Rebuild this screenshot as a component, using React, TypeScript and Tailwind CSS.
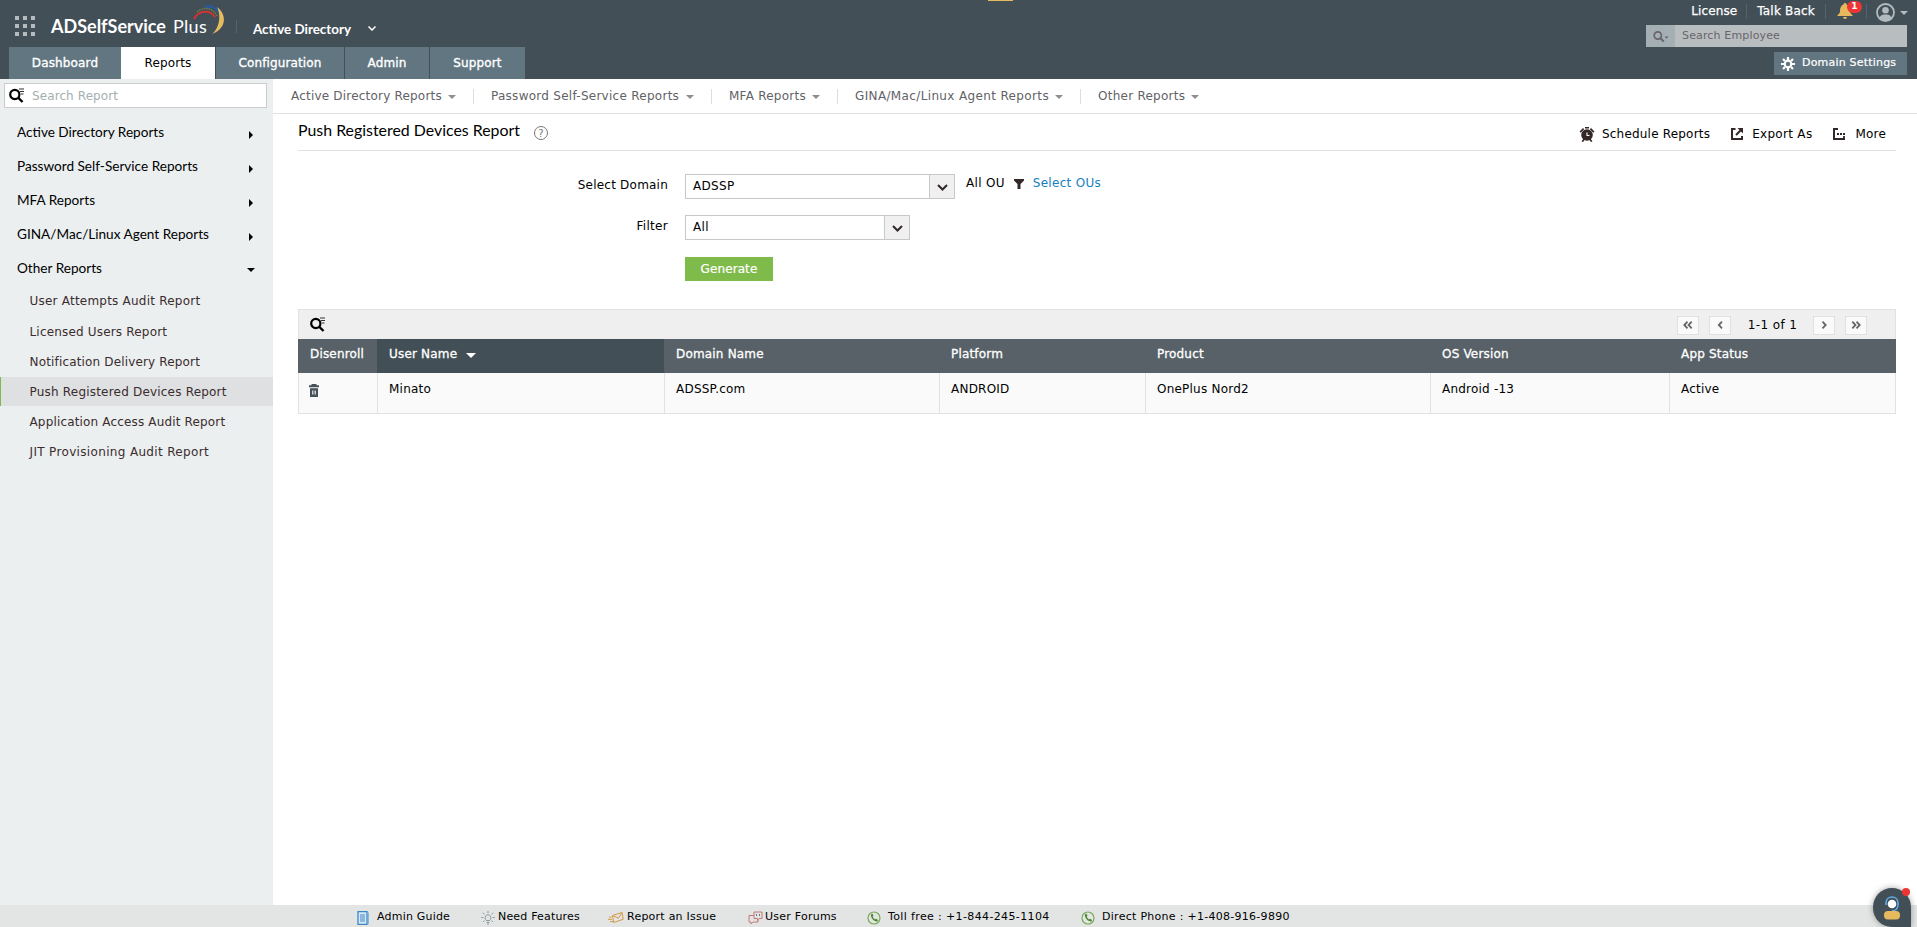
import type { ReactNode } from "react";
import clsx from "clsx";

const tabs = [
  { label: "Dashboard", width: "w-[112px]" },
  { label: "Reports", width: "w-[94px]", active: true },
  { label: "Configuration", width: "w-[128px]" },
  { label: "Admin", width: "w-[84px]" },
  { label: "Support", width: "w-[95px]" },
];

const categories = [
  { label: "Active Directory Reports", height: "h-[33px]" },
  { label: "Password Self-Service Reports", height: "h-[34px]" },
  { label: "MFA Reports", height: "h-[34px]" },
  { label: "GINA/Mac/Linux Agent Reports", height: "h-[34px]" },
  { label: "Other Reports", height: "h-[34px]", open: true },
];

const otherReports = [
  { label: "User Attempts Audit Report", height: "h-[31px]", tracking: "tracking-[0.22px]" },
  { label: "Licensed Users Report", height: "h-[31px]", tracking: "tracking-[0.18px]" },
  { label: "Notification Delivery Report", height: "h-[30px]", tracking: "tracking-[0.16px]" },
  { label: "Push Registered Devices Report", height: "h-[29px]", tracking: "tracking-[0.2px]", active: true },
  { label: "Application Access Audit Report", height: "h-[31px]", tracking: "tracking-[0.16px]" },
  { label: "JIT Provisioning Audit Report", height: "h-[30px]", tracking: "tracking-[0.34px]" },
];

const reportMenus = [
  { label: "Active Directory Reports", width: "w-[151px]", tracking: "tracking-[0.2px]" },
  { label: "Password Self-Service Reports", width: "w-[189px]", tracking: "tracking-[0.27px]" },
  { label: "MFA Reports", width: "w-[77px]", tracking: "tracking-[0.25px]" },
  { label: "GINA/Mac/Linux Agent Reports", width: "w-[194px]", tracking: "tracking-[0.36px]" },
  { label: "Other Reports", width: "w-[87px]", tracking: "tracking-[0.25px]" },
];

const columns = [
  { label: "Disenroll", value: "", width: "w-[79px]" },
  { label: "User Name", value: "Minato", width: "w-[287px]", sorted: true },
  { label: "Domain Name", value: "ADSSP.com", width: "w-[275px]" },
  { label: "Platform", value: "ANDROID", width: "w-[206px]" },
  { label: "Product", value: "OnePlus Nord2", width: "w-[285px]" },
  { label: "OS Version", value: "Android -13", width: "w-[239px]" },
  { label: "App Status", value: "Active", width: "w-[227px]" },
];

function CaretDown({ className }: { className: string }) {
  return (
    <svg viewBox="0 0 8 4" className={clsx("shrink-0", className)} fill="currentColor">
      <path d="M0 0h8L4 4z" />
    </svg>
  );
}

function GridIcon() {
  return (
    <div className="grid h-5 w-5 grid-cols-3 gap-1">
      {Array.from({ length: 9 }).map((_, i) => (
        <span key={i} className="h-1 w-1 bg-[#b4babd]" />
      ))}
    </div>
  );
}

function LogoArc() {
  return (
    <svg viewBox="0 0 32 30" className="h-[30px] w-8" fill="none">
      <path d="M1 14C5 6 16 3.500 22 12" stroke="#e02f2c" strokeWidth="1.8" />
      <path d="M4 7C11 1 20 3 24 11" stroke="#6c8045" strokeWidth="1.6" strokeDasharray="1.500 1" />
      <path d="M12 1.500C21 0 27 6 28 13" stroke="#245ba8" strokeWidth="2" />
      <path d="M24 2c9 6 11 21-5 27 8-7 9-19 5-27z" fill="#e5bb60" />
    </svg>
  );
}

function SearchListIcon() {
  return (
    <svg viewBox="0 0 16 15" className="h-[15px] w-4 shrink-0" fill="none" stroke="#000">
      <circle cx="5.800" cy="6.500" r="4.600" strokeWidth="2.2" />
      <path d="M9 9.500l4.500 4.500" strokeWidth="2.4" />
      <path d="M10 1h5M11 3.500h4M12 6h2.500" strokeWidth="1.2" stroke="#333" />
    </svg>
  );
}

function AlarmIcon() {
  return (
    <svg viewBox="0 0 16 16" className="h-4 w-4" fill="#332728">
      <circle cx="8" cy="9" r="5.800" />
      <path d="M0.500 5.500L4 2l1.200 1.200L1.700 6.700zM15.500 5.500L12 2l-1.200 1.200 3.500 3.500zM6 1h4v1.600H6zM2.500 15.500l2-3 1.500 1-2 2.500zM13.500 15.500l-2-3-1.500 1 2 2.500z" />
      <path d="M8 6.500v3h2.500" fill="none" stroke="#fff" strokeWidth="1.1" />
    </svg>
  );
}

function ExportIcon() {
  return (
    <svg viewBox="0 0 14 14" className="h-3.5 w-3.5" fill="none" stroke="#332728" strokeWidth="2">
      <path d="M5.500 2H2v10h10V9" />
      <path d="M6 8l5.500-5.500" />
      <path d="M7.500 1h5.500v5.500z" fill="#332728" stroke="none" />
    </svg>
  );
}

function MoreIcon() {
  return (
    <svg viewBox="0 0 14 14" className="h-3.5 w-3.5" fill="none" stroke="#332728" strokeWidth="2">
      <path d="M6 2H2v10h11" />
      <path d="M5 7h2M8 7h2M11 7h2M12 9v4" strokeWidth="1.800" />
    </svg>
  );
}

function TrashIcon() {
  return (
    <svg viewBox="0 0 10 13" className="h-[13px] w-2.5" fill="#45525a">
      <path d="M0 1.300h2.500V0h5v1.300H10V3.300H0zM1 4.300h8V13H1z" />
      <path d="M3.800 6.500v4M6.200 6.500v4" stroke="#fafafa" strokeWidth="1.1" />
    </svg>
  );
}

function PhoneIcon() {
  return (
    <svg viewBox="0 0 14 14" className="h-3.5 w-3.5" fill="none">
      <circle cx="7" cy="7" r="6" stroke="#77ab57" strokeWidth="1.2" />
      <path d="M4.200 3.200c-1.500 2.500 3 7.800 6.200 7.300l.6-1.400-2-1.300-1 .6C6.800 7.800 6 6.600 5.700 5.600l.8-.9-1-1.900z" fill="#4d8431" />
    </svg>
  );
}

function GuideIcon() {
  return (
    <svg viewBox="0 0 12 14" className="h-3.5 w-3" fill="none">
      <path d="M1 .7h9v12.600H1z" fill="#d8eaf7" stroke="#3e86c8" strokeWidth="1.300" />
      <path d="M11 1.500v11.800" stroke="#6ba7da" strokeWidth="1.500" />
      <path d="M3 4h5M3 6h5M3 8h5M3 10h5" stroke="#3e86c8" />
    </svg>
  );
}

function BulbIcon() {
  return (
    <svg viewBox="0 0 14 14" className="h-3.5 w-3.5" fill="none" stroke="#8a979d">
      <path d="M5.300 9.500C3 7.500 4.500 3.700 7 3.700s4 3.800 1.700 5.800zM5.500 11.300h3M6 13h2" />
      <path d="M7 0v2M2 1.700l1.500 1.600M12 1.700l-1.500 1.600M.3 6.500h2M11.700 6.500h2M2 11l1.300-1.300M12 11l-1.300-1.300" />
    </svg>
  );
}

function MailIcon() {
  return (
    <svg viewBox="0 0 16 14" className="h-3.5 w-4" fill="none" stroke="#d39a44">
      <path d="M4.500 4.500L14 1.500l1.200 6.800-9.500 3.200zM4.500 4.500l6 2.700 3.500-5.700" />
      <path d="M1 6h2.500M0 8.300h4M2 10.600h3" />
    </svg>
  );
}

function ForumsIcon() {
  return (
    <svg viewBox="0 0 15 14" className="h-3.5 w-[15px]" fill="none" stroke="#c2797b">
      <path d="M6 1h8v6.500h-3l-1.500 2V7.500H6z" />
      <path d="M6 4.500H1V11h2v2l2-2h5V8.500" />
      <path d="M8.500 3v2M11.500 3v2" stroke="#777" />
    </svg>
  );
}

function Header() {
  return (
    <header className="relative flex h-[79px] justify-between bg-[#434f57] text-white">
      <div className="absolute top-0 left-[988px] h-px w-[25px] bg-[#e5bb60]" />
      <div className="flex flex-col justify-between">
        <div className="flex h-[47px] items-start pl-[15px]">
          <div className="pt-4">
            <GridIcon />
          </div>
          <div className="ml-4 flex pt-[14px] font-[Lato] text-[18px] leading-6">
            <span className="w-[117px] font-bold">ADSelfService</span>
            <span className="ml-[5px] w-[20px] tracking-[0.3px]">Plus</span>
          </div>
          <div className="relative z-10 pt-[5px]">
            <LogoArc />
          </div>
          <div className="mt-5 ml-[11px] h-[13px] w-px bg-[#57636b]" />
          <span className="mt-[19px] ml-4 w-[98px] font-[Lato] text-[13.4px] leading-5 font-bold whitespace-nowrap">
            Active Directory
          </span>
          <svg viewBox="0 0 8 5" className="mt-[26px] ml-[17px] h-[5px] w-2" fill="none" stroke="#fff" strokeWidth="1.500">
            <path d="M.5.5L4 4 7.500.5" />
          </svg>
        </div>
        <nav className="flex gap-px pl-[9px]">
          {tabs.map((tab) => (
            <a
              key={tab.label}
              className={clsx(
                "flex h-8 items-center justify-center text-[12px] tracking-[0.13px]",
                tab.width,
                tab.active
                  ? "-ml-px bg-white text-black"
                  : "bg-[#627682] text-white [-webkit-text-stroke:0.35px_white]"
              )}
            >
              {tab.label}
            </a>
          ))}
        </nav>
      </div>

      <div className="flex flex-col items-end pr-[10px] text-[12px]">
        <div className="flex h-[25px] items-start">
          <span className="pt-[3px] leading-4 tracking-[0.1px] [-webkit-text-stroke:0.25px_white]">License</span>
          <span className="mt-1 ml-[9px] h-[15px] w-px bg-[#57636b]" />
          <span className="ml-[10px] pt-[3px] leading-4 tracking-[0.2px] [-webkit-text-stroke:0.25px_white]">Talk Back</span>
          <span className="mt-1 ml-[10px] h-[15px] w-px bg-[#57636b]" />
          <div className="relative mt-[3px] ml-[11px] h-4 w-[29px]">
            <svg viewBox="0 0 16 16" className="h-4 w-4" fill="#e5b95c">
              <path d="M8 0c1 0 1.500.6 1.500 1.500C12 2.500 13 5 13 8c0 2 1 3 2.500 4v1H.5v-1C2 11 3 10 3 8c0-3 1-5.500 3.500-6.500C6.500.6 7 0 8 0zM6 14h4c0 1.200-1 2-2 2s-2-.8-2-2z" />
            </svg>
            <span className="absolute -top-[2px] left-[10px] flex h-[12px] w-[15px] items-center justify-center rounded-full bg-[#ee3535] text-[9px] font-bold">
              1
            </span>
          </div>
          <span className="mt-1 ml-0 h-[15px] w-px bg-[#57636b]" />
          <svg viewBox="0 0 19 19" className="mt-[3px] ml-[9px] h-[19px] w-[19px]">
            <circle cx="9.500" cy="9.500" r="8.500" fill="#434f57" stroke="#b1babf" strokeWidth="1.800" />
            <circle cx="9.500" cy="7.200" r="3.300" fill="#b1babf" />
            <path d="M3.500 15c1-3.300 3.500-3.500 6-3.500s5 .2 6 3.500c-3.500 4-8.500 4-12 0z" fill="#b1babf" />
          </svg>
          <CaretDown className="mt-[11px] -mr-px ml-[5px] h-1 w-2 text-[#b1babf]" />
        </div>
        <div className="flex h-[22px] w-[261px] text-[11px] text-[#6b6569]">
          <div className="flex w-[29px] items-center justify-center bg-[#a3afb3]">
            <svg viewBox="0 0 16 11" className="h-[11px] w-4" fill="none" stroke="#6b6569">
              <circle cx="4.800" cy="4.500" r="3.600" strokeWidth="1.700" />
              <path d="M7.300 7l3.500 3.700" strokeWidth="2" />
              <path d="M11.500 5.500h4l-2 2.200z" fill="#6b6569" stroke="none" />
            </svg>
          </div>
          <div className="flex flex-1 items-center bg-[#b8bdc0] pl-[7px] tracking-[0.15px]">Search Employee</div>
        </div>
        <div className="mt-[5px] flex h-[23px] w-[133px] items-center bg-[#627682] pl-[7px] text-[11px] tracking-[0.2px]">
          <svg viewBox="0 0 14 14" className="mr-[7px] h-3.5 w-3.5" fill="none" stroke="#fff">
            <circle cx="7" cy="7" r="3.300" strokeWidth="2.200" />
            <path
              d="M7 0v3M7 11v3M0 7h3M11 7h3M2 2l2 2M10 10l2 2M12 2l-2 2M4 10l-2 2"
              strokeWidth="2.200"
            />
          </svg>
          <span className="[-webkit-text-stroke:0.2px_white]">Domain Settings</span>
        </div>
      </div>
    </header>
  );
}

function Sidebar() {
  return (
    <aside className="w-[273px] shrink-0 bg-[#ebeff0] pt-1">
      <div className="ml-1 flex h-[25px] w-[263px] items-center border border-[#ccc] bg-white pl-1 text-[12px] text-[#a4b0b0]">
        <SearchListIcon />
        <span className="ml-[7px] tracking-[0.1px]">Search Report</span>
      </div>
      <div className="pt-2">
        {categories.map((item) => (
          <div key={item.label} className={clsx("flex items-center justify-between pr-[18px] pl-[17px]", item.height)}>
            <span className="font-[Lato] text-[13.6px] text-black">{item.label}</span>
            {item.open ? (
              <CaretDown className="mt-[4px] h-1 w-2 text-black" />
            ) : (
              <svg viewBox="0 0 4 8" className="mt-[5px] mr-[2px] h-2 w-1">
                <path d="M0 0l4 4-4 4z" />
              </svg>
            )}
          </div>
        ))}
      </div>
      <ul>
        {otherReports.map((item) => (
          <li
            key={item.label}
            className={clsx(
              "flex items-center border-l pl-[28.5px] text-[12px] text-[#3b2c2e]",
              item.height,
              item.tracking,
              item.active ? "border-[#7fbb4a] bg-[#dfe0e2]" : "border-transparent"
            )}
          >
            {item.label}
          </li>
        ))}
      </ul>
    </aside>
  );
}

function SelectBox({ value, className }: { value: string; className: string }) {
  return (
    <div className={clsx("flex h-[25px] border border-[#c8c8c8] bg-white", className)}>
      <span className="flex flex-1 items-center pb-px pl-[7px] tracking-[0.3px]">{value}</span>
      <span className="flex w-[25px] items-center justify-center border-l border-[#c8c8c8] bg-[#f0f0f0]">
        <svg viewBox="0 0 11 7" className="mt-px h-[7px] w-[11px]" fill="none" stroke="#332728" strokeWidth="2">
          <path d="M1 1l4.500 4.500L10 1" />
        </svg>
      </span>
    </div>
  );
}

function PagerButton({ children }: { children: ReactNode }) {
  return (
    <span className="flex h-[19px] w-[22px] items-center justify-center border border-[#e1e1e1] bg-[#fafafa]">
      <svg viewBox="0 0 10 8" className="h-2 w-2.5" fill="none" stroke="#666" strokeWidth="1.800">
        {children}
      </svg>
    </span>
  );
}

function DevicesTable() {
  return (
    <div className="w-[1598px] border border-[#e1e3e3]">
      <div className="flex h-[29px] items-center bg-[#efefef] pr-[28px] pl-[11px]">
        <SearchListIcon />
        <div className="mt-px ml-auto flex items-center">
          <PagerButton>
            <path d="M4.500.7L1.300 4l3.200 3.300M8.700.7L5.500 4l3.200 3.300" />
          </PagerButton>
          <span className="w-[10px]" />
          <PagerButton>
            <path d="M7 .7L3.800 4 7 7.300" />
          </PagerButton>
          <span className="w-[82px] pl-px text-center tracking-[0.4px]">1-1 of 1</span>
          <PagerButton>
            <path d="M3.500.7L6.700 4 3.500 7.300" />
          </PagerButton>
          <span className="w-[10px]" />
          <PagerButton>
            <path d="M1.300.7L4.500 4 1.300 7.300M5.500.7L8.700 4 5.500 7.300" />
          </PagerButton>
        </div>
      </div>
      <div className="-mx-px flex h-[34px] bg-[#576167] text-white">
        {columns.map((col) => (
          <div
            key={col.label}
            className={clsx(
              "flex items-center pb-1 pl-3 tracking-[0.18px] [-webkit-text-stroke:0.3px_white]",
              col.width,
              col.sorted && "bg-[#434f57]"
            )}
          >
            {col.label}
            {col.sorted && <CaretDown className="mt-[2px] ml-[9px] h-[5px] w-[10px]" />}
          </div>
        ))}
      </div>
      <div className="-mx-px flex h-[40px] border-r border-[#e1e3e3] bg-[#fafafa] text-black">
        {columns.map((col, i) => (
          <div
            key={col.label}
            className={clsx(
              "flex border-l border-[#e1e3e3] pt-2 pl-[11px] leading-4 tracking-[0.22px]",
              i === columns.length - 1 ? "flex-1" : col.width
            )}
          >
            {i === 0 ? (
              <span className="-ml-px pt-[3px]">
                <TrashIcon />
              </span>
            ) : (
              <span className="whitespace-nowrap">{col.value}</span>
            )}
          </div>
        ))}
      </div>
    </div>
  );
}

function Content() {
  return (
    <main className="min-w-0 flex-1 bg-white text-[12px] text-black">
      <nav className="flex h-[35px] items-center border-b border-[#e1e1e1] pl-[18px] text-[#5f6266]">
        {reportMenus.map((menu, i) => (
          <div key={menu.label} className="flex items-center">
            {i > 0 && <span className="mr-[17px] ml-[17px] h-[15px] w-px bg-[#dedede]" />}
            <span className={clsx("whitespace-nowrap", menu.width, menu.tracking)}>{menu.label}</span>
            <CaretDown className="mt-[2px] ml-[6px] h-1 w-2 text-[#8f8f8f]" />
          </div>
        ))}
      </nav>

      <div className="ml-[25px] flex h-[37px] w-[1598px] items-center border-b border-[#e1e1e1]">
        <h1 className="-mt-[5px] font-[Lato] text-[15.9px]">Push Registered Devices Report</h1>
        <span className="mt-[2px] ml-[14px] flex h-3.5 w-3.5 items-center justify-center rounded-full border border-[#777] text-[10px] text-[#777]">
          ?
        </span>
        <div className="mt-[3px] ml-auto flex items-center pr-[10px] tracking-[0.2px]">
          <AlarmIcon />
          <span className="ml-[7px]">Schedule Reports</span>
          <span className="mr-2 ml-5">
            <ExportIcon />
          </span>
          <span className="tracking-[0.3px]">Export As</span>
          <span className="mr-[9px] ml-5">
            <MoreIcon />
          </span>
          <span>More</span>
        </div>
      </div>

      <form className="flex flex-col pt-[23px]">
        <div className="flex h-[24px]">
          <label className="w-[395px] pt-[3px] text-right leading-4 tracking-[0.22px]">Select Domain</label>
          <SelectBox value="ADSSP" className="ml-[17px] w-[270px]" />
          <span className="ml-[11px] leading-[18px] tracking-[0.3px]">All OU</span>
          <svg viewBox="0 0 10 10" className="mt-[5px] ml-[9px] h-2.5 w-2.5" fill="#332728">
            <path d="M0 0h10v1.500L6.500 5v5h-3V5L0 1.500z" />
          </svg>
          <a className="ml-[9px] leading-[18px] tracking-[0.3px] text-[#1580c0]">Select OUs</a>
        </div>
        <div className="mt-[17px] flex h-[25px]">
          <label className="w-[395px] pt-[3px] text-right leading-4 tracking-[0.3px]">Filter</label>
          <SelectBox value="All" className="ml-[17px] w-[225px]" />
        </div>
        <button
          type="button"
          className="mt-[17px] ml-[412px] h-6 w-[88px] bg-[#7fbb4a] pb-px text-white tracking-[0.1px] [-webkit-text-stroke:0.2px_white]"
        >
          Generate
        </button>
      </form>

      <div className="mt-7 ml-[25px]">
        <DevicesTable />
      </div>
    </main>
  );
}

function FooterItem({ icon, label, className }: { icon: ReactNode; label: string; className: string }) {
  return (
    <a className={clsx("flex items-center whitespace-nowrap", className)}>
      {icon}
      {label}
    </a>
  );
}

function Footer() {
  return (
    <footer className="flex h-[22px] items-center bg-[#e3e5e5] pt-[3px] pl-[357px] text-[11px] text-black">
      <FooterItem icon={<GuideIcon />} label="Admin Guide" className="w-[124px] gap-2 tracking-[0.2px]" />
      <FooterItem icon={<BulbIcon />} label="Need Features" className="w-[127px] gap-[3px] tracking-[0.18px]" />
      <FooterItem icon={<MailIcon />} label="Report an Issue" className="w-[140px] gap-[3px] tracking-[0.24px]" />
      <FooterItem icon={<ForumsIcon />} label="User Forums" className="w-[119px] gap-[2px] tracking-[0.24px]" />
      <FooterItem
        icon={<PhoneIcon />}
        label="Toll free : +1-844-245-1104"
        className="w-[214px] gap-[7px] tracking-[0.37px]"
      />
      <FooterItem icon={<PhoneIcon />} label="Direct Phone : +1-408-916-9890" className="gap-[7px] tracking-[0.28px]" />
    </footer>
  );
}

function ChatButton() {
  return (
    <div className="absolute right-[6px] bottom-0 h-[39px] w-[38px] rounded-full rounded-br-lg bg-[#434f57] shadow-[0_0_6px_rgba(0,0,0,0.35)]">
      <svg viewBox="0 0 38 39" className="h-full w-full">
        <path d="M13 17v-2c0-8 12-8 12 0v2" fill="none" stroke="#5eaeee" strokeWidth="1.600" />
        <path d="M25 17c0 4-3 6-6 5.500" fill="none" stroke="#5eaeee" strokeWidth="1.400" />
        <circle cx="19" cy="16" r="4.300" fill="#fff" />
        <rect x="11" y="23" width="16" height="8.500" rx="4" fill="#e5b95c" />
      </svg>
      <span className="absolute top-0 right-[1px] h-2 w-2 rounded-full bg-[#ee3535]" />
    </div>
  );
}

export default function App() {
  return (
    <div className="relative flex h-[927px] w-[1917px] flex-col overflow-hidden bg-white font-['DejaVu_Sans',Verdana,sans-serif]">
      <Header />
      <div className="flex flex-1">
        <Sidebar />
        <Content />
      </div>
      <Footer />
      <ChatButton />
    </div>
  );
}
